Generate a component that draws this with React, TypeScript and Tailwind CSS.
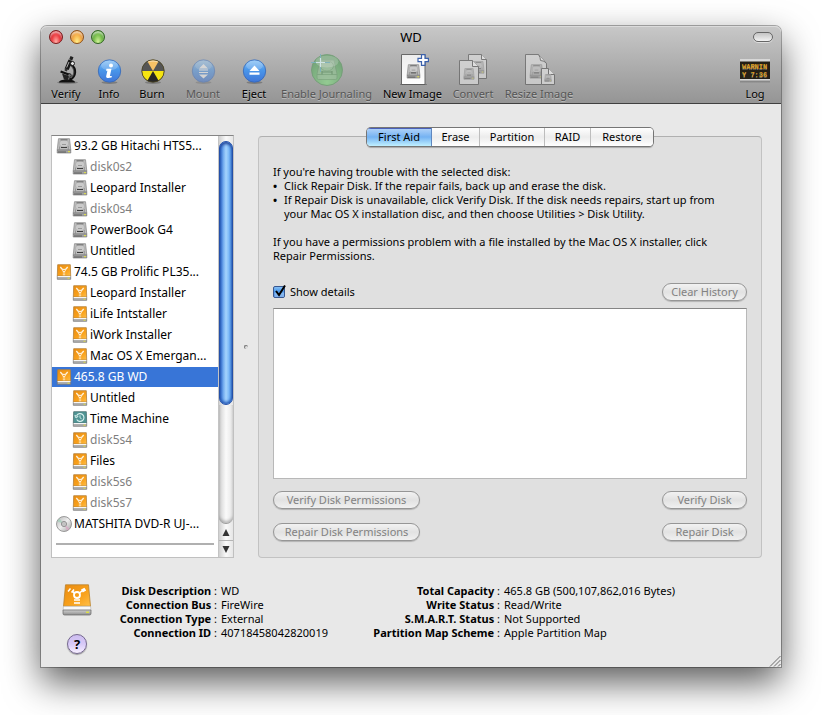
import { useState } from 'react';
import type { ReactNode } from 'react';
import clsx from 'clsx';

type DiskKind = 'internal' | 'firewire' | 'timemachine' | 'optical';

interface DiskEntry {
  id: string;
  name: string;
  kind: DiskKind;
  child?: boolean;
  unmounted?: boolean;
}

const DISKS: DiskEntry[] = [
  { id: 'disk0', name: '93.2 GB Hitachi HTS5...', kind: 'internal' },
  { id: 'disk0s2', name: 'disk0s2', kind: 'internal', child: true, unmounted: true },
  { id: 'disk0s3', name: 'Leopard Installer', kind: 'internal', child: true },
  { id: 'disk0s4', name: 'disk0s4', kind: 'internal', child: true, unmounted: true },
  { id: 'disk0s5', name: 'PowerBook G4', kind: 'internal', child: true },
  { id: 'disk0s6', name: 'Untitled', kind: 'internal', child: true },
  { id: 'disk1', name: '74.5 GB Prolific PL35...', kind: 'firewire' },
  { id: 'disk1s1', name: 'Leopard Installer', kind: 'firewire', child: true },
  { id: 'disk1s2', name: 'iLife Intstaller', kind: 'firewire', child: true },
  { id: 'disk1s3', name: 'iWork Installer', kind: 'firewire', child: true },
  { id: 'disk1s4', name: 'Mac OS X Emergan...', kind: 'firewire', child: true },
  { id: 'disk5', name: '465.8 GB WD', kind: 'firewire' },
  { id: 'disk5s2', name: 'Untitled', kind: 'firewire', child: true },
  { id: 'disk5s3', name: 'Time Machine', kind: 'timemachine', child: true },
  { id: 'disk5s4', name: 'disk5s4', kind: 'firewire', child: true, unmounted: true },
  { id: 'disk5s5', name: 'Files', kind: 'firewire', child: true },
  { id: 'disk5s6', name: 'disk5s6', kind: 'firewire', child: true, unmounted: true },
  { id: 'disk5s7', name: 'disk5s7', kind: 'firewire', child: true, unmounted: true },
  { id: 'dvd', name: 'MATSHITA DVD-R UJ-...', kind: 'optical' },
];

const TABS = [
  { name: 'First Aid', width: 'w-[65px]' },
  { name: 'Erase', width: 'w-[48px]' },
  { name: 'Partition', width: 'w-[65px]' },
  { name: 'RAID', width: 'w-[46px]' },
  { name: 'Restore', width: 'w-[62px]' },
];

const DISK_INFO = [
  ['Disk Description', 'WD'],
  ['Connection Bus', 'FireWire'],
  ['Connection Type', 'External'],
  ['Connection ID', '40718458042820019'],
];

const CAPACITY_INFO = [
  ['Total Capacity', '465.8 GB (500,107,862,016 Bytes)'],
  ['Write Status', 'Read/Write'],
  ['S.M.A.R.T. Status', 'Not Supported'],
  ['Partition Map Scheme', 'Apple Partition Map'],
];

// Gradients shared by every icon on the page
function SharedDefs() {
  return (
    <svg width="0" height="0" className="absolute" aria-hidden="true">
      <defs>
        <linearGradient id="orange" x1="0" y1="0" x2="1" y2="1">
          <stop offset="0" stopColor="#e88a10" />
          <stop offset="0.6" stopColor="#f9a21c" />
          <stop offset="1" stopColor="#ffc04a" />
        </linearGradient>
        <linearGradient id="metal" x1="0" y1="0" x2="0" y2="1">
          <stop offset="0" stopColor="#cfcfcf" />
          <stop offset="1" stopColor="#8e8e8e" />
        </linearGradient>
        <linearGradient id="blue" x1="0" y1="0" x2="0" y2="1">
          <stop offset="0" stopColor="#8cc4f6" />
          <stop offset="0.45" stopColor="#4a97ea" />
          <stop offset="1" stopColor="#3f76d8" />
        </linearGradient>
        <linearGradient id="paper" x1="0" y1="0" x2="0" y2="1">
          <stop offset="0" stopColor="#ececec" />
          <stop offset="1" stopColor="#ffffff" />
        </linearGradient>
        <radialGradient id="green" cx="0.5" cy="0.9" r="0.8">
          <stop offset="0" stopColor="#8fd88d" />
          <stop offset="1" stopColor="#5f9f66" />
        </radialGradient>
        <linearGradient id="disc" x1="0" y1="0" x2="1" y2="1">
          <stop offset="0" stopColor="#b5b5b5" />
          <stop offset="0.5" stopColor="#eeeeee" />
          <stop offset="1" stopColor="#a0a0a0" />
        </linearGradient>
      </defs>
    </svg>
  );
}

function InternalDrive() {
  return (
    <>
      <path d="M2.500.700h11l1.300 11.300H1.200z" fill="#bdbdbd" stroke="#8f8f8f" strokeWidth="0.8" />
      <ellipse cx="8" cy="5.500" rx="4.500" ry="3.600" fill="#cacaca" stroke="#a6a6a6" strokeWidth="0.6" />
      <path d="M4.500 1.800h7" stroke="#6c6c6c" strokeWidth="1" />
      <path d="M6 6.500h4" stroke="#8d8d8d" strokeWidth="0.8" />
      <path d="M5 9.500h6" stroke="#3c3c3c" strokeWidth="1" />
      <path d="M3.500 8.500v3M12.300 8v3.500" stroke="#8a8a8a" strokeWidth="0.8" />
      <path d="M1.200 12h13.600v3H1.200z" fill="#a4a4a4" stroke="#707070" strokeWidth="0.6" />
      <path d="M2 14h8" stroke="#5c5c5c" strokeWidth="1" />
      <rect x="12" y="13" width="2" height="1.200" fill="#dcdc50" />
    </>
  );
}

// Lower lip of the small external drive icons
function DriveBase() {
  return (
    <>
      <path d="M1.300 12.300h13.400v3H1.300z" fill="#b0b0b0" stroke="#737373" strokeWidth="0.7" />
      <path d="M1.600 12.500h12.800" stroke="#f6f6f6" strokeWidth="1" />
      <rect x="11.500" y="13.700" width="2" height="1" fill="#e2de3c" />
    </>
  );
}

function DiskIcon({ kind }: { kind: DiskKind }) {
  return (
    <svg viewBox="0 0 16 16" className="size-4 shrink-0" aria-hidden="true">
      {kind === 'internal' && <InternalDrive />}
      {kind === 'firewire' && (
        <>
          <path d="M1.700.700h12.600l.4 11.600H1.300z" fill="url(#orange)" stroke="#b5813a" strokeWidth="0.8" />
          <path d="M4.300 3l2.400 2.700M11.700 3L9.300 5.700" stroke="#fff3dc" strokeWidth="1.300" fill="none" />
          <circle cx="8" cy="6.500" r="1.300" fill="none" stroke="#fff" strokeWidth="0.9" />
          <path d="M6.800 9h2.400M6.800 10.800h2.400" stroke="#fff1d6" strokeWidth="0.9" />
          <DriveBase />
        </>
      )}
      {kind === 'timemachine' && (
        <>
          <path d="M1.700.700h12.600l.4 11.600H1.300z" fill="#4f9494" stroke="#4a6f6f" strokeWidth="0.8" />
          <path d="M4.700 4.500a3.900 3.900 0 1 1 0 4" fill="none" stroke="#d9f0ee" strokeWidth="1.100" />
          <path d="M2.800 4.500l1.200 2.500 2.200-1.600zM8 4.300v2.500l1.600 1" fill="none" stroke="#d9f0ee" strokeWidth="0.9" />
          <DriveBase />
        </>
      )}
      {kind === 'optical' && (
        <>
          <circle cx="8" cy="8" r="7.500" fill="url(#disc)" stroke="#858585" strokeWidth="0.8" />
          <path d="M8 8L1.500 5.500a7 7 0 0 1 2-3z" fill="#9ecdb8" opacity="0.7" />
          <path d="M8 8l5.500 4.500a7 7 0 0 1-2.500 2z" fill="#dca7c4" opacity="0.7" />
          <circle cx="8" cy="8" r="2.600" fill="#d8d8d8" stroke="#7f7f7f" strokeWidth="0.8" />
          <circle cx="8" cy="8" r="1.100" fill="#fff" stroke="#777" strokeWidth="0.5" />
        </>
      )}
    </svg>
  );
}

function MicroscopeIcon() {
  return (
    <svg viewBox="0 0 32 32" className="size-8" aria-hidden="true">
      <ellipse cx="17.500" cy="28.500" rx="10.500" ry="1.500" fill="#333" opacity="0.35" />
      <path d="M9 28.500c0-2 3-3 8-3s8 1 8 3z" fill="#111" />
      <path d="M21 10.500c5 4 5.500 11.500-1.500 15.500" fill="none" stroke="#111" strokeWidth="2.800" />
      <path d="M21.500 12c3 4 3.200 8.500-.5 12" fill="none" stroke="#888" strokeWidth="0.600" />
      <path d="M18.500 5.500l4 1.600-3.800 9-4-1.600z" fill="#161616" />
      <path d="M19 8l-2.300 5.500" stroke="#bbb" strokeWidth="0.900" />
      <path d="M20.500 2l3 1.200-1.300 3.300-3-1.200z" fill="#222" />
      <path d="M15 14l2.800 1.200-1 2.300-2.300-1z" fill="#333" />
      <path d="M11 16.500l9.500 3.500-.8 2-9.500-3.500z" fill="#111" />
      <path d="M12 19.500l7 2.500-1 4.500-4-1z" fill="#222" />
      <circle cx="22.500" cy="9.500" r="2" fill="#e5e5e5" stroke="#111" strokeWidth="0.900" />
      <circle cx="19.500" cy="21.500" r="1.800" fill="#777" stroke="#111" strokeWidth="0.800" />
    </svg>
  );
}

function BlueOrb({ children, faded }: { children: ReactNode; faded?: boolean }) {
  return (
    <svg viewBox="0 0 32 32" className={clsx('size-8', faded && 'opacity-50')} aria-hidden="true">
      <ellipse cx="16.500" cy="28.500" rx="8" ry="1.500" fill="#444" opacity="0.4" />
      <circle cx="16.500" cy="17" r="11.200" fill="url(#blue)" stroke="#3566b5" strokeWidth="0.8" />
      <ellipse cx="16.500" cy="11.500" rx="8.500" ry="4.800" fill="#fff" opacity="0.2" />
      {children}
    </svg>
  );
}

function BurnIcon() {
  return (
    <svg viewBox="0 0 32 32" className="size-8" aria-hidden="true">
      <ellipse cx="17" cy="28.500" rx="8" ry="1.500" fill="#444" opacity="0.4" />
      <circle cx="17" cy="17" r="11.200" fill="#262626" />
      <path d="M17 17L11.500 7.400a11 11 0 0 1 11 0z" fill="#f7b13c" />
      <path d="M17 17H6a11 11 0 0 0 5.500 9.500z" fill="#f5e411" />
      <path d="M17 17h11a11 11 0 0 1-5.500 9.500z" fill="#f5e411" />
      <path d="M5.800 17a11.200 11.200 0 0 1 22.400 0z" fill="#fff" opacity="0.22" />
      <path d="M10.500 8.500a11 11 0 0 1 13 0c-4-1.200-9-1.200-13 0z" fill="#fff" opacity="0.55" />
      <circle cx="17" cy="17" r="11.200" fill="none" stroke="#4a431d" strokeWidth="0.8" />
    </svg>
  );
}

function MiniDrive({ x, y, size }: { x: number; y: number; size: number }) {
  return (
    <svg x={x} y={y} width={size} height={size} viewBox="0 0 16 16">
      <InternalDrive />
    </svg>
  );
}

function JournalingIcon() {
  return (
    <svg viewBox="0 0 36 32" className="h-8 w-9 opacity-75" aria-hidden="true">
      <circle cx="18" cy="16" r="15.500" fill="url(#green)" stroke="#609765" strokeWidth="0.8" />
      <g opacity="0.5">
        <path d="M11 6h14l3 14v4q0 1.500-1.500 1.500h-17Q8 25.500 8 24v-4z" fill="#a9c4aa" stroke="#6a8c6d" strokeWidth="0.9" />
        <path d="M8 20.500h20" stroke="#6a8c6d" strokeWidth="0.9" />
        <ellipse cx="18" cy="12" rx="6.500" ry="5" fill="#b9ceba" stroke="#7b997d" strokeWidth="0.9" />
        <path d="M13 18h10M13 17v3.500M23 17v3.500" stroke="#49694c" strokeWidth="1.200" />
      </g>
      <ellipse cx="18" cy="7.500" rx="11.500" ry="6" fill="#fff" opacity="0.25" />
      <path d="M11.500 0v18M2 8.500h19" stroke="#6fb2bd" strokeWidth="1" />
      <path d="M11.500 4v9M7 8.500h9" stroke="#dcf6f6" strokeWidth="1.200" />
    </svg>
  );
}

function NewImageIcon() {
  return (
    <svg viewBox="0 0 32 32" className="size-8" aria-hidden="true">
      <path d="M4.500.500h23.500v30H4.500z" fill="url(#paper)" stroke="#686868" />
      <path d="M3 30.500h27" stroke="#555" opacity="0.500" />
      <MiniDrive x={9} y={10} size={15} />
      <path d="M24.500.600h3.500v3.700h3.400v3.400H28v3.700h-3.500V7.700H21V4.300h3.500z" fill="#fff" stroke="#3b61ac" strokeWidth="1.200" />
    </svg>
  );
}

function ConvertIcon() {
  return (
    <svg viewBox="0 0 32 32" className="size-8 opacity-60" aria-hidden="true">
      <path d="M11.500.500h13l5 5v19h-18z" fill="#e2e2e2" stroke="#555" />
      <path d="M24.500.500v5h5" fill="#f8f8f8" stroke="#555" />
      <MiniDrive x={15} y={7} size={13} />
      <path d="M2.500 6.500h13l6 6v18h-19z" fill="#e5e5e5" stroke="#555" />
      <path d="M15.500 6.500v6h6" fill="#fff" stroke="#555" />
      <MiniDrive x={6} y={14} size={12} />
    </svg>
  );
}

function ResizeIcon() {
  return (
    <svg viewBox="0 0 32 32" className="size-8 opacity-60" aria-hidden="true">
      <path d="M2.500.500h13l8 9v21h-21z" fill="#e2e2e2" stroke="#555" />
      <path d="M15.500.500q2 3 2 6 4 0 6 3" fill="#f8f8f8" stroke="#555" />
      <MiniDrive x={6} y={10} size={15} />
      <path d="M18.500 14.500h7l6 6v10h-13z" fill="#eaeaea" stroke="#555" />
      <path d="M25.500 14.500v6h6" fill="#fff" stroke="#555" />
      <MiniDrive x={21} y={20} size={8} />
    </svg>
  );
}

function LogIcon() {
  return (
    <svg viewBox="0 0 32 32" className="size-8" aria-hidden="true">
      <path d="M1 5h30v3H1zM1 25h30v2H1z" fill="#d7d7d7" />
      <path d="M1 26.500h30v2H1z" fill="#888" />
      <path d="M1 7.500h30V25H1z" fill="#241f16" />
      <text x="3" y="15" fontSize="7" fontWeight="bold" fill="#dc9d22" fontFamily="Liberation Mono, monospace">WARNIN</text>
      <text x="3" y="23" fontSize="7" fontWeight="bold" fill="#dc9d22" fontFamily="Liberation Mono, monospace">Y 7:36</text>
    </svg>
  );
}

function ToolbarItem({ label, width, disabled, children }: { label: string; width: string; disabled?: boolean; children: ReactNode }) {
  return (
    <button
      type="button"
      disabled={disabled}
      className={clsx(
        'flex shrink-0 flex-col items-center text-[11px] leading-4 whitespace-nowrap [text-shadow:0_1px_0_rgba(255,255,255,0.35)]',
        width,
        disabled ? 'text-[#555]' : 'text-black',
      )}
    >
      {children}
      {label}
    </button>
  );
}

function PillButton({ children, className }: { children: ReactNode; className: string }) {
  return (
    <button
      type="button"
      disabled
      className={clsx(
        'h-[18px] rounded-full border border-[#969696] bg-linear-to-b from-[#f2f2f2] via-[#e2e2e2] to-[#f0f0f0] text-[11px] leading-4 whitespace-nowrap text-[#828282] shadow-[0_1px_1px_rgba(0,0,0,0.2)]',
        className,
      )}
    >
      {children}
    </button>
  );
}

function InfoList({ rows, labelWidth }: { rows: string[][]; labelWidth: string }) {
  return (
    <dl className="text-[11px] leading-[14px] whitespace-nowrap">
      {rows.map(([label, value]) => (
        <div key={label} className="flex gap-1">
          <dt className={clsx('shrink-0 text-right font-bold', labelWidth)}>
            {label} <span className="font-normal">:</span>
          </dt>
          <dd>{value}</dd>
        </div>
      ))}
    </dl>
  );
}

function ScrollBar() {
  return (
    <div className="flex w-[15px] shrink-0 flex-col border-l border-[#c4c4c4] bg-linear-to-r from-[#d0d0d0] via-[#fafafa] to-[#e6e6e6]">
      <div className="h-[5px]" />
      <div className="h-[264px] rounded-full border border-[#2450a8] bg-linear-to-r from-[#3275d8] via-[#a4d3fd] to-[#4f9df0] shadow-[inset_0_2px_3px_#24479a,inset_0_-2px_3px_#2c62bd]" />
      <div className="flex-1 rounded-b-full border-b border-[#999] shadow-[inset_0_-2px_3px_rgba(0,0,0,0.25)]" />
      <button type="button" aria-label="Scroll up" className="flex h-[17px] items-center justify-center border-b border-[#b4b4b4]">
        <svg viewBox="0 0 8 7" className="h-[7px] w-2"><path d="M4 0l3.500 7h-7z" fill="#333" /></svg>
      </button>
      <button type="button" aria-label="Scroll down" className="flex h-4 items-center justify-center">
        <svg viewBox="0 0 8 7" className="h-[7px] w-2"><path d="M4 7L.500 0h7z" fill="#333" /></svg>
      </button>
    </div>
  );
}

function FireWireDrive() {
  return (
    <svg viewBox="0 0 30 32" className="h-8 w-[30px]" aria-hidden="true">
      <path d="M3.500.800h23l2 21.500h-27z" fill="url(#orange)" stroke="#b9832f" strokeWidth="0.800" />
      <path d="M1.500 22.300h27l.5 4H1z" fill="#f8f8f8" stroke="#aaa" strokeWidth="0.500" />
      <path d="M1 26h28v3.500q0 1.500-1.500 1.500h-25Q1 31 1 29.500z" fill="url(#metal)" stroke="#666" strokeWidth="0.700" />
      <circle cx="15" cy="11" r="3" fill="none" stroke="#fff" strokeWidth="1.800" />
      <path d="M12.500 9L10.500 7.500M17.500 9l3-2.500M12 16h6M12 19h6" stroke="#fff" strokeWidth="1.600" />
      <path d="M19 5.500l3.500-1.800 1.700 2.800-3.400 2z" fill="#fff" />
      <path d="M9.500 8.500L12 5.500M6 7.500L8.500 4.500" stroke="#fff" strokeWidth="1.500" />
      <rect x="24" y="27.500" width="3" height="1.500" fill="#dce043" />
    </svg>
  );
}

export default function App() {
  const [selected, setSelected] = useState('disk5');
  const [tab, setTab] = useState('First Aid');
  const [showDetails, setShowDetails] = useState(true);

  return (
    <div className="bg-white px-[41px] pt-[26px] pb-12 font-['Noto_Sans',sans-serif] text-black">
      <SharedDefs />
      <main className="relative rounded-t-md bg-[#e8e8e8] shadow-[0_0_0_1px_rgba(0,0,0,0.3),0_15px_36px_rgba(0,0,0,0.65)]">
        <header className="rounded-t-md border-b border-[#404040] bg-linear-to-b from-[#c8c8c8] to-[#959595] shadow-[inset_0_1px_0_#dcdcdc]">
          <div className="grid h-[22px] grid-cols-3 items-center px-2">
            <div className="flex gap-[7px]">
              <button type="button" aria-label="Close" className="size-[14px] rounded-full border border-[#7a1a1c] bg-radial-[at_50%_90%] from-[#ffb0a8] via-[#ec3a40] to-[#a81a20] shadow-[inset_0_2px_2px_rgba(255,255,255,0.6)]" />
              <button type="button" aria-label="Minimize" className="size-[14px] rounded-full border border-[#8d5018] bg-radial-[at_50%_90%] from-[#fff08c] via-[#f5ac45] to-[#c46a20] shadow-[inset_0_2px_2px_rgba(255,255,255,0.6)]" />
              <button type="button" aria-label="Zoom" className="size-[14px] rounded-full border border-[#2f6420] bg-radial-[at_50%_90%] from-[#d2f29a] via-[#76bd4a] to-[#3a7c28] shadow-[inset_0_2px_2px_rgba(255,255,255,0.6)]" />
            </div>
            <h1 className="text-center text-[13px] leading-4">WD</h1>
            <button type="button" aria-label="Toggle toolbar" className="h-[10px] w-5 justify-self-end rounded-full border border-[#666] bg-linear-to-b from-[#c4c4c4] to-[#f2f2f2] shadow-[0_1px_0_rgba(255,255,255,0.5)]" />
          </div>
          <div className="flex gap-[10px] pt-[6px] pr-[10px] pb-px pl-[9px]">
            <ToolbarItem label="Verify" width="w-8"><MicroscopeIcon /></ToolbarItem>
            <ToolbarItem label="Info" width="w-[34px]">
              <BlueOrb>
                <circle cx="18" cy="11.500" r="2" fill="#fff" />
                <path d="M13.500 14.800h5l-1.600 7.200h2l-.4 1.600q-6 1.400-5.300-1.600l1.200-5.200h-1.400z" fill="#fff" />
              </BlueOrb>
            </ToolbarItem>
            <ToolbarItem label="Burn" width="w-8"><BurnIcon /></ToolbarItem>
            <ToolbarItem label="Mount" width="w-[50px]" disabled>
              <BlueOrb faded>
                <path d="M16.500 10l4.500 4.500h-9zM12 15.500h9v1H12zM12 18h9v1H12zM16.500 24.500L12 20.500h9z" fill="#fff" />
              </BlueOrb>
            </ToolbarItem>
            <ToolbarItem label="Eject" width="w-8">
              <BlueOrb>
                <path d="M16.500 11.500l5 5.500h-10zM11.500 18.500h10v2.200h-10z" fill="#fff" />
              </BlueOrb>
            </ToolbarItem>
            <ToolbarItem label="Enable Journaling" width="w-[93px]" disabled><JournalingIcon /></ToolbarItem>
            <ToolbarItem label="New Image" width="w-[59px]"><NewImageIcon /></ToolbarItem>
            <ToolbarItem label="Convert" width="w-[42px]" disabled><ConvertIcon /></ToolbarItem>
            <ToolbarItem label="Resize Image" width="w-[70px]" disabled><ResizeIcon /></ToolbarItem>
            <div className="flex-1" />
            <ToolbarItem label="Log" width="w-8"><LogIcon /></ToolbarItem>
          </div>
        </header>

        <div className="flex pt-[31px] pr-[19px] pl-[10px]">
          {/* Disk list */}
          <aside className="flex h-[423px] w-[183px] shrink-0 border border-[#c0c0c0] border-t-[#858585] bg-white">
            <div className="min-w-0 flex-1">
              <ul>
                {DISKS.map(disk => (
                  <li key={disk.id} className="pb-px">
                    <button
                      type="button"
                      onClick={() => setSelected(disk.id)}
                      className={clsx(
                        'flex h-5 w-full items-center gap-[2px] text-left text-[12px] leading-5 whitespace-nowrap',
                        disk.child ? 'pl-5' : 'pl-1',
                        selected === disk.id ? 'bg-[#3875d7] text-white' : disk.unmounted ? 'text-[#7f7f7f]' : 'text-black',
                      )}
                    >
                      <DiskIcon kind={disk.kind} />
                      {disk.name}
                    </button>
                  </li>
                ))}
              </ul>
              <hr className="mx-1 mt-2 border-t-2 border-[#b0b0b0]" />
            </div>
            <ScrollBar />
          </aside>

          {/* Splitter */}
          <div className="flex w-6 shrink-0 items-center justify-center">
            <div className="size-1 rounded-full border-t border-l border-[#777] bg-[#ddd]" />
          </div>

          <section className="mt-px flex min-w-0 flex-1 flex-col rounded-[4px] border border-[#c2c2c2] border-t-[#b0b0b0] bg-[#e0e0e0] px-[14px] pb-4">
            <div role="tablist" className="-mt-[9px] flex h-[18px] self-center overflow-hidden rounded-[4px] bg-white shadow-[0_0_0_1px_#757575,0_2px_1px_rgba(0,0,0,0.25)]">
              {TABS.map(t => (
                <button
                  key={t.name}
                  type="button"
                  role="tab"
                  aria-selected={tab === t.name}
                  onClick={() => setTab(t.name)}
                  className={clsx(
                    'border-r text-[11px] leading-4 last:border-r-0',
                    t.width,
                    tab === t.name
                      ? 'border-[#5f87bf] bg-linear-to-b from-[#b4d4f8] via-[#74b2f2] to-[#c0f0ff] shadow-[inset_0_1px_0_#4a5fb8]'
                      : 'border-[#bdbdbd] bg-linear-to-b from-white via-[#ececec] to-white',
                  )}
                >
                  {t.name}
                </button>
              ))}
            </div>

            <div className="pt-[19px] pr-4 text-[11px] leading-[14px]">
              <p>If you're having trouble with the selected disk:</p>
              <ul className="list-none">
                <li className="flex"><span className="w-[11px] shrink-0 font-bold">•</span><span>Click Repair Disk. If the repair fails, back up and erase the disk.</span></li>
                <li className="flex"><span className="w-[11px] shrink-0 font-bold">•</span><span>If Repair Disk is unavailable, click Verify Disk. If the disk needs repairs, start up from your Mac OS X installation disc, and then choose Utilities &gt; Disk Utility.</span></li>
              </ul>
              <p className="pt-[14px]">If you have a permissions problem with a file installed by the Mac OS X installer, click Repair Permissions.</p>
            </div>

            <div className="flex items-center justify-between pt-5">
              <label className="flex items-center gap-[3px] text-[11px] leading-4">
                <input
                  type="checkbox"
                  checked={showDetails}
                  onChange={e => setShowDetails(e.target.checked)}
                  className="peer sr-only"
                />
                <svg viewBox="0 0 14 14" className="size-[14px] overflow-visible" aria-hidden="true">
                  <rect x="0.500" y="1.500" width="11" height="11" rx="1.500" fill="url(#blue)" stroke="#38578f" />
                  <path d="M1.500 7.500h9.500V12H1.500z" fill="#bfe6ff" opacity="0.5" />
                  {showDetails && <path d="M3 6l3 4L12 .500" fill="none" stroke="#000" strokeWidth="2" />}
                </svg>
                Show details
              </label>
              <PillButton className="w-[85px]">Clear History</PillButton>
            </div>

            <textarea
              readOnly
              aria-label="Details"
              className="mt-[7px] block w-full flex-1 resize-none border border-[#b8b8b8] border-t-[#858585] bg-white"
            />
            <div className="flex justify-between pt-3">
              <PillButton className="w-[147px]">Verify Disk Permissions</PillButton>
              <PillButton className="w-[85px]">Verify Disk</PillButton>
            </div>
            <div className="flex justify-between pt-[14px]">
              <PillButton className="w-[147px]">Repair Disk Permissions</PillButton>
              <PillButton className="w-[85px]">Repair Disk</PillButton>
            </div>
          </section>
        </div>

        <footer className="flex pt-[26px] pb-[13px]">
          <div className="flex w-[72px] shrink-0 flex-col items-center gap-[18px]">
            <FireWireDrive />
            <button type="button" aria-label="Help" className="size-5 rounded-full border border-[#75688f] bg-linear-to-b from-[#cdbdf0] via-[#d8caf8] to-[#f8f0ff] text-[13px] leading-4 font-bold shadow-[0_1px_1px_rgba(0,0,0,0.35)]">?</button>
          </div>
          <div className="w-[247px] shrink-0"><InfoList rows={DISK_INFO} labelWidth="w-[104px]" /></div>
          <InfoList rows={CAPACITY_INFO} labelWidth="w-[140px]" />
        </footer>

        <svg viewBox="0 0 12 12" className="absolute right-0 bottom-0 size-3" aria-hidden="true">
          <path d="M1 11.500L11.500 1M5 11.500L11.500 5M9 11.500L11.500 9" stroke="#6a6a6a" strokeWidth="1" />
        </svg>
      </main>
    </div>
  );
}
